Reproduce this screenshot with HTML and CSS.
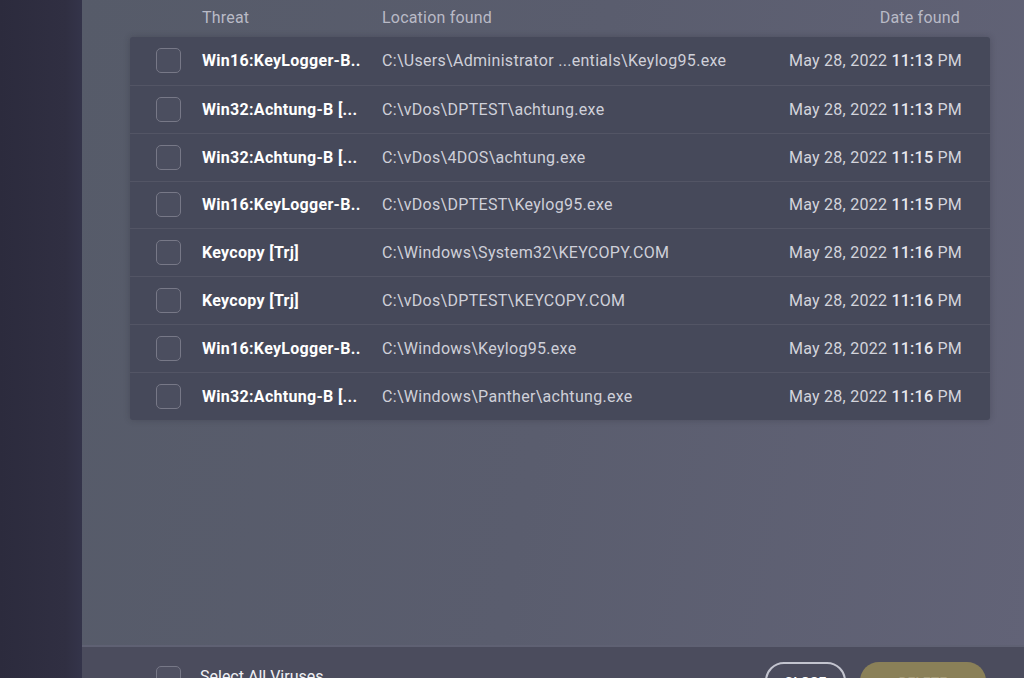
FILE: index.html
```html
<!DOCTYPE html>
<html>
<head>
<meta charset="utf-8">
<link rel="stylesheet" href="styles.css">
</head>
<body>
<div class="app">
  <aside class="sidebar"></aside>
  <main class="main">
    <div class="content">
      <div class="head">
        <span></span>
        <span>Threat</span>
        <span>Location found</span>
        <span class="date-h">Date found</span>
      </div>
      <div class="table">
        <div class="row"><span class="cb"></span><span class="threat">Win16:KeyLogger-B..</span><span class="loc">C:\Users\Administrator ...entials\Keylog95.exe</span><span class="date">May 28, 2022 <b>11:13</b> PM</span></div>
        <div class="row"><span class="cb"></span><span class="threat">Win32:Achtung-B [...</span><span class="loc">C:\vDos\DPTEST\achtung.exe</span><span class="date">May 28, 2022 <b>11:13</b> PM</span></div>
        <div class="row"><span class="cb"></span><span class="threat">Win32:Achtung-B [...</span><span class="loc">C:\vDos\4DOS\achtung.exe</span><span class="date">May 28, 2022 <b>11:15</b> PM</span></div>
        <div class="row"><span class="cb"></span><span class="threat">Win16:KeyLogger-B..</span><span class="loc">C:\vDos\DPTEST\Keylog95.exe</span><span class="date">May 28, 2022 <b>11:15</b> PM</span></div>
        <div class="row"><span class="cb"></span><span class="threat">Keycopy [Trj]</span><span class="loc">C:\Windows\System32\KEYCOPY.COM</span><span class="date">May 28, 2022 <b>11:16</b> PM</span></div>
        <div class="row"><span class="cb"></span><span class="threat">Keycopy [Trj]</span><span class="loc">C:\vDos\DPTEST\KEYCOPY.COM</span><span class="date">May 28, 2022 <b>11:16</b> PM</span></div>
        <div class="row"><span class="cb"></span><span class="threat">Win16:KeyLogger-B..</span><span class="loc">C:\Windows\Keylog95.exe</span><span class="date">May 28, 2022 <b>11:16</b> PM</span></div>
        <div class="row"><span class="cb"></span><span class="threat">Win32:Achtung-B [...</span><span class="loc">C:\Windows\Panther\achtung.exe</span><span class="date">May 28, 2022 <b>11:16</b> PM</span></div>
      </div>
    </div>
    <footer class="footer">
      <label class="select-all"><span class="cb"></span><span>Select All Viruses</span></label>
      <div class="actions">
        <button class="btn btn-close">CLOSE</button>
        <button class="btn btn-delete">DELETE</button>
      </div>
    </footer>
  </main>
</div>
</body>
</html>
```
FILE: styles.css
```css
* { box-sizing: border-box; }
html, body { margin: 0; padding: 0; height: 100%; overflow: hidden; }
body {
  font-family: Roboto, "Liberation Sans", sans-serif;
  background: #2f2e40;
}
.app { display: flex; height: 678px; }
.sidebar {
  width: 82px;
  flex: none;
  background: linear-gradient(90deg, #2c2b3d 0%, #302f42 80%, #34344a 100%);
}
.main {
  flex: 1;
  display: flex;
  flex-direction: column;
  background: linear-gradient(100deg, #565b69 0%, #5a5d6e 50%, #626377 100%);
}
.content { flex: 1; padding: 0 34px 0 48px; }
.head {
  display: grid;
  grid-template-columns: 72px 180px 1fr auto;
  align-items: center;
  height: 37px;
  padding-right: 30px;
  color: #b9bac6;
  font-size: 16px;
  letter-spacing: 0.2px;
  padding-bottom: 3px;
}
.table {
  background: #46495a;
  border-radius: 3px;
  box-shadow: 0 0 6px rgba(30, 30, 45, 0.25);
}
.row {
  display: grid;
  grid-template-columns: 26px 25px 21px 180px 1fr auto;
  grid-template-areas: ". cb . threat loc date";
  align-items: center;
  height: 47.85px;
  padding-right: 28px;
  border-top: 1px solid rgba(255, 255, 255, 0.07);
}
.row:first-child { border-top: none; }
.row .cb { grid-area: cb; }
.threat { grid-area: threat; color: #ffffff; font-weight: 700; font-size: 16px; letter-spacing: 0.3px; white-space: nowrap; }
.loc { grid-area: loc; color: #cfd0d9; font-size: 16px; letter-spacing: 0.3px; white-space: nowrap; }
.date { grid-area: date; color: #d3d4dc; font-size: 16px; letter-spacing: 0.25px; white-space: nowrap; }
.date b { font-weight: 500; color: #e8e8ee; }
.cb {
  display: block;
  width: 25px;
  height: 25px;
  border: 1.5px solid #777887;
  border-radius: 5px;
  background: rgba(255, 255, 255, 0.03);
}
.footer {
  flex: none;
  height: 33px;
  background: #4b4c5d;
  border-top: 2px solid #5f6173;
  display: flex;
  align-items: flex-start;
  justify-content: space-between;
  padding: 15px 38px 0 74px;
  overflow: visible;
}
.select-all {
  display: flex;
  gap: 19px;
  align-items: flex-start;
  color: #f0f0f4;
  font-size: 16px;
  padding-top: 4px;
}
.select-all span:last-child { margin-top: 1px; }
.actions { display: flex; gap: 14px; }
.btn {
  font-family: Roboto, "Liberation Sans", sans-serif;
  font-weight: 700;
  font-size: 13px;
  letter-spacing: 0.5px;
  height: 38px;
  border-radius: 19px;
  padding: 0;
  display: flex;
  align-items: flex-start;
  justify-content: center;
  padding-top: 10px;
}
.btn-close {
  width: 81px;
  background: transparent;
  border: 2px solid #c3c4cf;
  color: #ffffff;
}
.btn-delete {
  width: 126px;
  background: #8a8058;
  border: none;
  color: #a79d78;
  padding-top: 12px;
}
```
